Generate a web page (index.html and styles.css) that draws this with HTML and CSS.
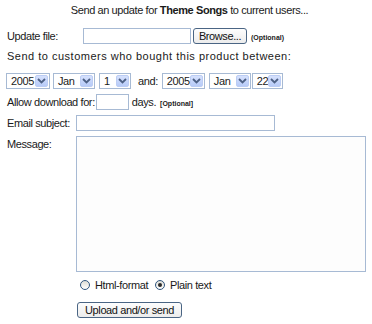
FILE: index.html
```html
<!DOCTYPE html>
<html lang="en">
<head>
    <meta charset="UTF-8">
    <meta name="viewport" content="width=device-width, initial-scale=1.0">
    <title>Send update</title>
    <link rel="stylesheet" href="styles.css">
</head>
<body>
    <div class="page">

        <div class="title">Send an update for <b>Theme Songs</b> to current users...</div>

        <div class="row row-file">
            <span class="label label-file">Update file:</span>
            <span class="box file-box"></span>
            <span class="btn browse">Browse...</span>
            <span class="opt">(Optional)</span>
        </div>

        <div class="line">Send to customers who bought this product between:</div>

        <!-- date range -->
        <div class="row row-dates">
            <span class="sel year"><span class="val">2005</span><span class="arrow"><svg width="9" height="6" viewBox="0 0 9 6"><path d="M1 1l3.5 3.5L8 1" fill="none" stroke="#4d6185" stroke-width="1.8"/></svg></span></span>
            <span class="sel month"><span class="val">Jan</span><span class="arrow"><svg width="9" height="6" viewBox="0 0 9 6"><path d="M1 1l3.5 3.5L8 1" fill="none" stroke="#4d6185" stroke-width="1.8"/></svg></span></span>
            <span class="sel day"><span class="val">1</span><span class="arrow"><svg width="9" height="6" viewBox="0 0 9 6"><path d="M1 1l3.5 3.5L8 1" fill="none" stroke="#4d6185" stroke-width="1.8"/></svg></span></span>
            <span class="and">and:</span>
            <span class="sel year2"><span class="val">2005</span><span class="arrow"><svg width="9" height="6" viewBox="0 0 9 6"><path d="M1 1l3.5 3.5L8 1" fill="none" stroke="#4d6185" stroke-width="1.8"/></svg></span></span>
            <span class="sel month month2"><span class="val">Jan</span><span class="arrow"><svg width="9" height="6" viewBox="0 0 9 6"><path d="M1 1l3.5 3.5L8 1" fill="none" stroke="#4d6185" stroke-width="1.8"/></svg></span></span>
            <span class="sel day2"><span class="val">22</span><span class="arrow"><svg width="9" height="6" viewBox="0 0 9 6"><path d="M1 1l3.5 3.5L8 1" fill="none" stroke="#4d6185" stroke-width="1.8"/></svg></span></span>
        </div>

        <div class="row row-allow">
            <span class="label">Allow download for:</span>
            <span class="box days-box"></span>
            <span class="days">days.</span>
            <span class="opt">[Optional]</span>
        </div>

        <div class="row row-email">
            <span class="label label-short">Email subject:</span>
            <span class="box subject-box"></span>
        </div>

        <div class="row row-msg">
            <span class="label label-short">Message:</span>
            <span class="box msg-box"></span>
        </div>

        <div class="row row-radio">
            <span class="radio"></span>
            <span class="radio-text">Html-format</span>
            <span class="radio checked"></span>
            <span class="radio-text">Plain text</span>
        </div>

        <div class="row row-send">
            <span class="btn send">Upload and/or send</span>
        </div>
    </div>
</body>
</html>
```

FILE: styles.css
```css
body{
    margin: 0;
    background: #ffffff;
    font-family: "Liberation Sans", Arial, sans-serif;
    font-size: 11px;
    letter-spacing: -0.4px;
    color: #1a1a1a;
}

.page{
    padding-left: 7px;
}

.title{
    height: 20px;
    line-height: 20px;
    text-align: center;
}

.row{
    display: flex;
    align-items: center;
    white-space: nowrap;
}

.label{
    line-height: 16px;
}

.label-file{
    width: 76px;
}

.label-short{
    width: 69px;
}

.box{
    display: block;
    box-sizing: border-box;
    height: 16px;
    border: 1px solid #a7bad4;
    background: #ffffff;
}

/* update file */
.row-file{
    margin-top: 8px;
    height: 16px;
}

.file-box{
    width: 108px;
}

.btn{
    display: flex;
    align-items: center;
    justify-content: center;
    box-sizing: border-box;
    height: 16px;
    border: 1px solid #4a6584;
    border-radius: 3px;
    background: linear-gradient(#fdfdfd, #ececec);
    color: #111;
    white-space: nowrap;
}

.browse{
    width: 54px;
    margin-left: 2px;
}

.opt{
    font-size: 7px;
    font-weight: bold;
    letter-spacing: 0;
    margin-left: 4px;
    padding-top: 2px;
    color: #222;
}

.line{
    margin-top: 4px;
    height: 16px;
    line-height: 16px;
    letter-spacing: 0.5px;
}

/* selects */
.row-dates{
    margin-top: 9px;
    margin-left: -1px;
    height: 16px;
}

.sel{
    display: flex;
    align-items: center;
    justify-content: space-between;
    box-sizing: border-box;
    height: 16px;
    border: 1px solid #a7bad4;
    padding: 1px;
    padding-left: 4px;
}

.val{
    line-height: 12px;
}

.arrow{
    display: flex;
    align-items: center;
    justify-content: center;
    width: 13px;
    height: 12px;
    box-sizing: border-box;
    border: 1px solid #bccdf4;
    border-radius: 2px;
    background: linear-gradient(#d6e1fd, #b7cbf8);
}

.year{
    width: 44px;
    margin-right: 3px;
}

.month{
    width: 42px;
    margin-right: 4px;
}

.day{
    width: 32px;
}

.and{
    margin-left: 7px;
    margin-right: 4px;
}

.year2{
    width: 43px;
    margin-right: 4px;
}

.month2{
    margin-right: 1px;
}

.day2{
    width: 31px;
}

/* allow download */
.row-allow{
    margin-top: 5px;
    height: 16px;
}

.days-box{
    width: 33px;
    margin-left: 1px;
}

.days{
    margin-left: 3px;
}

/* email + message */
.row-email{
    margin-top: 5px;
}

.subject-box{
    width: 199px;
}

.row-msg{
    margin-top: 5px;
    align-items: flex-start;
}

.msg-box{
    width: 290px;
    height: 136px;
    background: #fdfdfd;
}

/* radios */
.row-radio{
    margin-top: 6px;
    margin-left: 73px;
    height: 14px;
}

.radio{
    position: relative;
    box-sizing: border-box;
    width: 10px;
    height: 10px;
    border: 1px solid #2f5680;
    border-radius: 50%;
    background: linear-gradient(#dcdcd5, #ffffff);
}

.radio.checked{
    margin-left: 7px;
}

.radio.checked::after{
    content: "";
    position: absolute;
    left: 2px;
    top: 2px;
    width: 4px;
    height: 4px;
    border-radius: 50%;
    background: #2a2a2a;
}

.radio-text{
    margin-left: 5px;
}

.send{
    width: 105px;
    margin-left: 70px;
    margin-top: 10px;
}
```
